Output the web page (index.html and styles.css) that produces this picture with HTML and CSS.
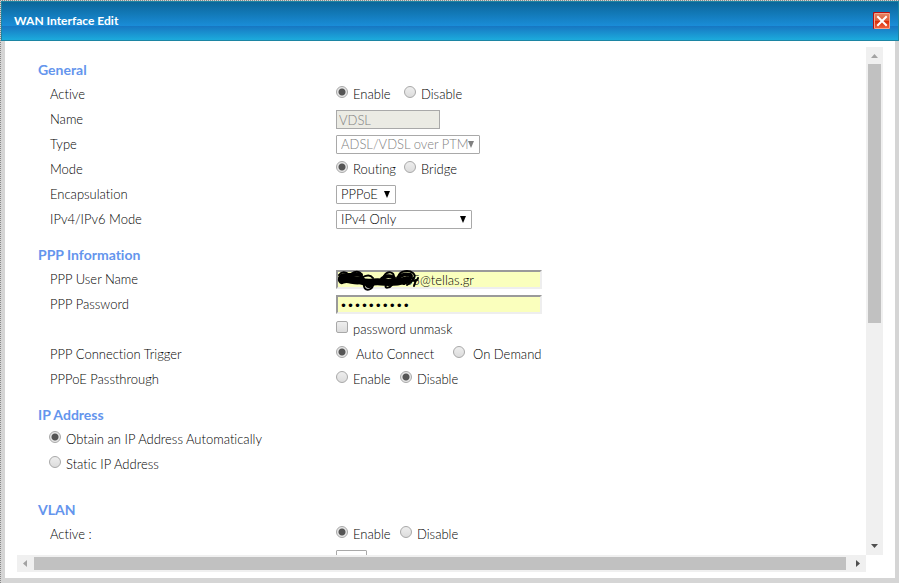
FILE: index.html
```html
<!DOCTYPE html>
<html lang="en">
<head>
<meta charset="utf-8">
<title>WAN Interface Edit</title>
<link rel="stylesheet" href="styles.css">
</head>
<body>
<div class="dialog">
  <header class="titlebar">
    <h1>WAN Interface Edit</h1>
    <button class="close" type="button" aria-label="Close">
      <svg width="17" height="17" viewBox="0 0 17 17">
        <defs>
          <linearGradient id="red" x1="0" y1="0" x2="0" y2="1">
            <stop offset="0" stop-color="#e4805f"/>
            <stop offset=".5" stop-color="#dc5a38"/>
            <stop offset=".52" stop-color="#d92c07"/>
            <stop offset="1" stop-color="#f0603c"/>
          </linearGradient>
        </defs>
        <rect width="17" height="17" rx="1" fill="#b80f0f"/>
        <rect x="1" y="1" width="16" height="16" rx="1" fill="#f4a48c"/>
        <rect x="2" y="2" width="14" height="14" fill="url(#red)"/>
        <path d="M5 5l8 8M13 5l-8 8" stroke="#fff" stroke-width="2" stroke-linecap="square"/>
      </svg>
    </button>
  </header>
  <main class="frame">
    <form class="content">
      <section>
        <h2>General</h2>
        <div class="row"><span>Active</span>
          <div class="options wide">
            <label><input type="radio" name="active" checked>Enable</label>
            <label><input type="radio" name="active">Disable</label>
          </div>
        </div>
        <div class="row"><label for="name">Name</label>
          <input id="name" class="name" type="text" value="VDSL" disabled></div>
        <div class="row"><label for="type">Type</label>
          <span class="select type"><select id="type" disabled><option>ADSL/VDSL over PTM</option></select><svg width="6" height="7" viewBox="0 0 6 7"><path d="M0 0h6L3 7z"/></svg></span></div>
        <div class="row"><span>Mode</span>
          <div class="options wide">
            <label><input type="radio" name="mode" checked>Routing</label>
            <label><input type="radio" name="mode">Bridge</label>
          </div>
        </div>
        <div class="row"><label for="encap">Encapsulation</label>
          <span class="select encap"><select id="encap"><option>PPPoE</option></select><svg width="6" height="7" viewBox="0 0 6 7"><path d="M0 0h6L3 7z"/></svg></span></div>
        <div class="row"><label for="ipmode">IPv4/IPv6 Mode</label>
          <span class="select ipmode"><select id="ipmode"><option>IPv4 Only</option></select><svg width="6" height="7" viewBox="0 0 6 7"><path d="M0 0h6L3 7z"/></svg></span></div>
      </section>
      <section>
        <h2>PPP Information</h2>
        <div class="row"><label for="user">PPP User Name</label>
          <span class="user"><input id="user" class="filled" type="text" value="35@tellas.gr">
            <svg class="scribble" width="86" height="22" viewBox="0 0 86 22" fill="none" stroke="#000" stroke-linecap="round" stroke-linejoin="round">
              <path stroke-width="8" d="M6 10C12 7 18 12 25 10"/>
              <path stroke-width="7" d="M25 11c7 3 12 0 20 1s18 0 26-2"/>
              <path stroke-width="4" d="M4 8c1-4 6-3 9-3s8-1 12 0M31 13c-1 4 4 4 6 1M46 9c3-3 8-4 12-1M62 8c3-4 9-4 12-3s-2 7-6 8"/>
              <path stroke-width="2" d="M3 5C7 0 14 3 12 7M15 4c6-4 12-2 10 4M25 8c5-3 9-4 12 0M28 14c-1 8 8 7 9 1M48 6c4-6 10-4 10 1M50 15c-2 4 4 3 6 0M62 7C64 0 73 0 77 3s0 8-6 12M77 8c-1 4 4 4 5 0M80 10l-2 6"/>
            </svg></span></div>
        <div class="row"><label for="pass">PPP Password</label>
          <input id="pass" class="filled" type="password" value="0123456789"></div>
        <div class="row"><span></span>
          <div class="options"><label><input type="checkbox">password unmask</label></div></div>
        <div class="row"><span>PPP Connection Trigger</span>
          <div class="options trigger">
            <label><input type="radio" name="trigger" checked>Auto Connect</label>
            <label><input type="radio" name="trigger">On Demand</label>
          </div>
        </div>
        <div class="row"><span>PPPoE Passthrough</span>
          <div class="options">
            <label><input type="radio" name="pass-through">Enable</label>
            <label><input type="radio" name="pass-through" checked>Disable</label>
          </div>
        </div>
      </section>
      <section class="last-ip">
        <h2>IP Address</h2>
        <div class="row options"><label><input type="radio" name="ip" checked>Obtain an IP Address Automatically</label></div>
        <div class="row options"><label><input type="radio" name="ip">Static IP Address</label></div>
      </section>
      <section>
        <h2>VLAN</h2>
        <div class="row"><span>Active :</span>
          <div class="options">
            <label><input type="radio" name="vlan" checked>Enable</label>
            <label><input type="radio" name="vlan">Disable</label>
          </div>
        </div>
        <div class="row"><span></span><span class="select priority"><select aria-label="802.1p"><option></option></select></span></div>
      </section>
    </form>
    <div class="vbar">
      <svg width="17" height="17" viewBox="0 0 17 17" fill="#a3a3a3"><path d="M5 11h7L8.500 7z"/></svg>
      <div class="vthumb"></div>
      <svg width="17" height="17" viewBox="0 0 17 17" fill="#505050"><path d="M5 6h7l-3.500 4z"/></svg>
    </div>
    <div class="hbar">
      <svg width="17" height="17" viewBox="0 0 17 17" fill="#a3a3a3"><path d="M10 5v7L6 8.500z"/></svg>
      <div class="hthumb"></div>
      <svg width="17" height="17" viewBox="0 0 17 17" fill="#505050"><path d="M7 5v7l4-3.500z"/></svg>
    </div>
  </main>
</div>
</body>
</html>
```
FILE: styles.css
```css
* { box-sizing: border-box; }

body {
  margin: 0;
  font: 300 13px/25px "Century Gothic", Lato, sans-serif;
  font-variant-ligatures: none;
  color: #000;
}

.dialog {
  display: flex;
  flex-direction: column;
  height: 100vh;
  border-top: 1px dotted #888;
  border-left: 1px dotted #888;
  background: #d5d5d5;
}

.titlebar {
  display: flex;
  flex: none;
  align-items: center;
  justify-content: space-between;
  height: 40px;
  padding: 0 8px 2px 12px;
  border: 1px solid #1c85a3;
  background: linear-gradient(#0b6699, #1a8dd8 24px, #1776c2 24px, #1cabdc);
}

h1 {
  margin: 0;
  font-size: 12px;
  color: #fff;
}

.close {
  display: flex;
  padding: 0;
  border: 0;
  background: none;
}

.frame {
  display: grid;
  flex: 1;
  grid-template: minmax(0, 1fr) 17px / minmax(0, 1fr) 17px;
  min-height: 0;
  margin: 0 4px 5px;
  padding: 6px 12px;
  background: #fff;
}

.content {
  overflow: hidden;
  padding: 10px 0 0 21px;
}

section { margin-bottom: 10px; }
.last-ip { margin-bottom: 20px; }

h2 {
  margin: 0;
  font-size: 14px;
  line-height: 25px;
  color: #6495ed;
}

.row {
  display: flex;
  align-items: center;
  height: 25px;
  padding-left: 12px;
}

.row.options { padding-left: 11px; }

.row > :first-child:not(:only-child) { flex: 0 0 286px; }

.options { display: flex; }
.options label { display: flex; min-width: 64px; }
.options.wide label { min-width: 68px; }
.options.trigger label { min-width: 117px; }
.options.trigger input { margin-right: 8px; }

input, select {
  height: 19px;
  margin: 0;
  border: 1px solid #a9a9a9;
  font: inherit;
  line-height: 17px;
}

input[type="radio"], input[type="checkbox"] {
  appearance: none;
  flex: none;
  width: 12px;
  height: 12px;
  margin: 4px 5px 0 0;
  border: 1px solid #a8a8a8;
  border-radius: 50%;
  background: linear-gradient(#eee, #dcdcdc);
}

input[type="checkbox"] { border-radius: 2px; }

input[type="radio"]:checked {
  background: radial-gradient(circle, #555 3px, #e6e6e6 4px);
}

.name {
  width: 104px;
  padding: 0 2px;
  background: #ebebe4;
  color: #808080;
}

.filled {
  width: 206px;
  padding: 0 2px;
  border: 2px solid;
  border-color: #9a9a9a #eee #eee #9a9a9a;
  background: #faffbd;
  line-height: 15px;
}

input[type="password"] { font-size: 12px; }

.user {
  display: flex;
  position: relative;
}

.user .filled { padding-left: 67px; }

.scribble {
  position: absolute;
  top: 0;
  left: 0;
}

.select {
  display: flex;
  position: relative;
}

select {
  appearance: none;
  width: 100%;
  padding: 0 4px;
  border-radius: 1px;
  background: #fff;
  color: #000;
}

select:disabled { color: #808080; opacity: 1; }

.select svg {
  position: absolute;
  top: 6px;
  right: 6px;
}

select:disabled + svg { fill: #808080; }

.type { width: 144px; }
.encap { width: 60px; }
.ipmode { width: 136px; }
.priority { width: 31px; }

.vbar, .hbar {
  display: flex;
  background: #f0f0f0;
}

.vbar { flex-direction: column; }
.vbar svg, .hbar svg { flex: none; }

.vthumb {
  flex: none;
  height: 51%;
  margin: 0 2px auto;
  background: #c1c1c1;
}

.hthumb {
  flex: 1;
  margin: 2px 3px 2px 0;
  background: #c1c1c1;
}
```
